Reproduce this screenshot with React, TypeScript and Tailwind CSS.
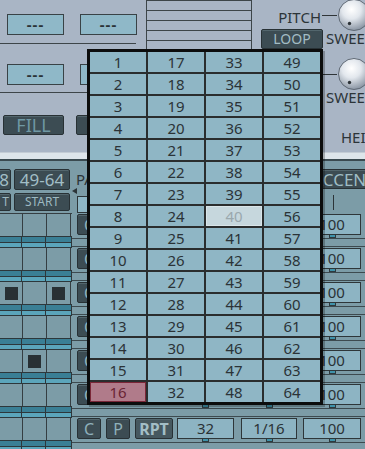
import React from "react";

const darkBtn =
  "flex items-center justify-center bg-[#3c4c53] border border-[#283135] rounded-[2px] shadow-[inset_0_1px_0_#53666d] leading-none";

function DashBox() {
  return (
    <div className="w-[57px] h-[21px] shrink-0 bg-[#8fb8c8] border border-[#394246] flex items-center justify-center text-[15px] font-bold tracking-[1px] text-[#2b3337] leading-none">
      ---
    </div>
  );
}

function Knob({ id }: { id: string }) {
  return (
    <svg width="34" height="34" viewBox="0 0 34 34" className="shrink-0">
      <defs>
        <radialGradient id={id} cx="42%" cy="32%" r="68%">
          <stop offset="0" stopColor="#ffffff" />
          <stop offset="0.45" stopColor="#e2e7ed" />
          <stop offset="1" stopColor="#8b96a4" />
        </radialGradient>
      </defs>
      <circle cx="17" cy="17" r="15.5" fill={`url(#${id})`} stroke="#5f6975" strokeWidth="1" />
      <circle cx="12.5" cy="25.5" r="1.7" fill="#2d3338" />
    </svg>
  );
}

function ValueBox({ w, ml, text }: { w: string; ml: string; text?: string }) {
  return (
    <div className={`flex flex-col items-center shrink-0 ${w} ${ml}`}>
      <div className="w-full h-[21px] bg-[#8db4c3] border border-[#2e3639] flex items-center justify-center text-[15px] text-[#2a3236] leading-none">
        {text}
      </div>
      <div className="w-[7px] h-[3px] bg-[#3f93ab] border border-t-0 border-[#2e3a3e]" />
    </div>
  );
}

// rows under the popup only show their first button edge and the "100" box
function SeqRow({ squares, full = false }: { squares: number[]; full?: boolean }) {
  return (
    <div className="flex h-[34px] shrink-0">
      {/* step grid */}
      <div className="w-[72px] shrink-0 flex flex-col">
        <div className="h-[22px] flex">
          {[0, 1, 2].map((i) => (
            <div
              key={i}
              className={`h-full border-r border-[#353e42] flex items-center justify-center ${i === 0 ? "w-[23px]" : "w-[24px]"}`}
            >
              {squares.includes(i) && <div className="w-[13px] h-[13px] bg-[#283034]" />}
            </div>
          ))}
        </div>
        <div className="h-[12px] flex flex-col border border-l-0 border-[#2d373b]">
          <div className="flex-1 bg-[#3a7f95] border-b border-[#2d373b] flex">
            <div className="w-[22px] border-r border-[#2d373b]" />
            <div className="w-[24px] border-r border-[#2d373b]" />
          </div>
          <div className="flex-1 bg-[#5ba5bb] flex">
            <div className="w-[22px] border-r border-[#2d373b]" />
            <div className="w-[24px] border-r border-[#2d373b]" />
          </div>
        </div>
      </div>

      {/* controls */}
      <div className="flex-1 flex flex-col">
        <div className="h-[22px] flex items-start">
          <div className={`${darkBtn} ml-[5px] w-[24px] h-[21px] text-[16px] text-[#8fb0ba]`}>C</div>
          <div className={`${darkBtn} ml-[5px] w-[24px] h-[21px] text-[16px] text-[#8fb0ba]`}>{full ? "P" : ""}</div>
          <div className={`${darkBtn} ml-[5px] w-[38px] h-[21px] text-[16px] font-bold text-[#a3bec6] bg-[#46585f]`}>
            {full ? "RPT" : ""}
          </div>
          <ValueBox w="w-[57px]" ml="ml-[4px]" text={full ? "32" : ""} />
          <ValueBox w="w-[56px]" ml="ml-[7px]" text={full ? "1/16" : ""} />
          <ValueBox w="w-[58px]" ml="ml-[6px]" text="100" />
        </div>
        <div className="h-[12px] flex flex-col">
          <div className="mt-[2px] h-px bg-[#3d4a4f]" />
          <div className="mt-[7px] h-px bg-[#3d4a4f]" />
        </div>
      </div>
    </div>
  );
}

function Popup() {
  const cells: number[] = [];
  for (let r = 0; r < 16; r++) for (let c = 0; c < 4; c++) cells.push(c * 16 + r + 1);
  return (
    <div className="absolute left-[87px] top-[49px] w-[236px] h-[356px] border-[3px] border-[#0c0d0d] bg-[#2a2d2e] grid grid-cols-4 grid-rows-16 gap-[2px] shadow-[2px_2px_0_rgba(0,0,0,0.25)]">
      {cells.map((n) => {
        let cls = "bg-[#8fb6c5] text-[#2b3337]";
        if (n === 40) cls = "bg-[#c6d7dd] text-[#9aa8ad] border border-[#d9e5e9]";
        if (n === 16) cls = "bg-[#b07b8a] text-[#6a2434] border border-[#7a2637]";
        return (
          <div key={n} className={`flex items-center justify-center text-[15px] leading-none ${cls}`}>
            {n}
          </div>
        );
      })}
    </div>
  );
}

export default function App() {
  return (
    <div className="relative w-[365px] h-[449px] overflow-hidden bg-[#a9b5c5] font-['Noto_Sans',sans-serif] text-[#2c3438]">
      {/* upper panel */}
      <div className="flex h-[152px]">
        {/* column A */}
        <div className="w-[146px] shrink-0 flex flex-col pt-[14px]">
          <div className="flex gap-[16px] pl-[7px]">
            <DashBox />
            <DashBox />
          </div>
          <div className="mt-[8px] h-px w-[136px] bg-[#3d4549]" />
          <div className="mt-[20px] flex gap-[16px] pl-[7px]">
            <DashBox />
            <DashBox />
          </div>
          <div className="mt-[7px] h-px w-[136px] bg-[#3d4549]" />
          <div className="mt-[22px] flex">
            <div className={`${darkBtn} ml-[3px] w-[61px] h-[20px] text-[18px] text-[#6f98a4]`}>FILL</div>
            <div className={`${darkBtn} ml-[12px] w-[61px] h-[20px]`} />
          </div>
        </div>

        {/* column B: staff lines */}
        <div className="w-[106px] shrink-0 border-x border-[#3d4549] flex flex-col">
          {[0, 1, 2, 3, 4].map((i) => (
            <div key={i} className="h-[10px] border-t border-[#3d4549] shrink-0" />
          ))}
        </div>

        {/* column C */}
        <div className="w-[71px] shrink-0 flex flex-col pt-[10px]">
          <div className="h-[15px] text-right pr-[2px] text-[15px] leading-[15px]">PITCH</div>
          <div className={`${darkBtn} mt-[4px] ml-[9px] w-[62px] h-[20px] text-[14px] text-[#a3bcc4]`}>LOOP</div>
        </div>

        {/* column D: knobs */}
        <div className="w-[42px] shrink-0 flex flex-col whitespace-nowrap">
          <div className="h-[30px] flex items-center">
            <div className="w-[15px] h-px bg-[#2f3538] shrink-0 -ml-px" />
            <Knob id="k1" />
          </div>
          <div className="mt-[1px] pl-[3px] text-[15px] leading-[15px]">SWEEP</div>
          <div className="mt-[13px] h-[30px] flex items-center">
            <div className="w-[15px] h-px bg-[#2f3538] shrink-0 -ml-px" />
            <Knob id="k2" />
          </div>
          <div className="mt-[1px] pl-[3px] text-[15px] leading-[15px]">SWEEP</div>
          <div className="mt-[25px] pl-[18px] text-[15px] leading-[15px]">HEIGHT</div>
        </div>
      </div>

      {/* light divider */}
      <div className="h-[9px] bg-[#dde5ea] border-t border-[#c3ccd4] border-b-2 border-b-[#3a4a50]" />

      {/* sequencer panel */}
      <div className="h-[288px] bg-[#7c9ca7] flex flex-col">
        <div className="h-[53px] flex shrink-0">
          <div className="w-[72px] shrink-0 flex flex-col pt-[8px] border-b border-[#353e42]">
            <div className="flex">
              <div className={`${darkBtn} -ml-[2px] w-[13px] h-[21px] text-[17px] text-[#a2bec6] justify-end pr-[1px]`}>8</div>
              <div className={`${darkBtn} ml-[3px] w-[56px] h-[21px] text-[17px] text-[#a2bec6]`}>49-64</div>
            </div>
            <div className="flex mt-[3px]">
              <div className={`${darkBtn} -ml-[2px] w-[13px] h-[18px] text-[12px] text-[#9db9c1] justify-end pr-[1px]`}>T</div>
              <div className={`${darkBtn} ml-[3px] w-[56px] h-[18px] text-[12px] text-[#9db9c1]`}>START</div>
            </div>
          </div>
          <div className="w-[60px] shrink-0 flex flex-col">
            <div className="mt-[11px] pl-[4px] h-[15px] text-[15px] leading-[15px] text-[#2c3438]">PATTERN</div>
            <div className="mt-[1px] w-0 h-0 border-y-[3.5px] border-y-transparent border-r-[5px] border-r-[#2c3438]" />
            <div className="mt-[2px] ml-[5px] w-[55px] h-[17px] bg-[#8fb6c5] border border-[#2e3639]" />
          </div>
          <div className="flex-1" />
          <div className="w-[62px] shrink-0 flex flex-col">
            <div className={`${darkBtn} mt-[8px] w-[82px] h-[20px] text-[17px] text-[#9fbcc4]`}>ACCENT</div>
            <div className="mt-[6px] ml-[30px] w-px h-[15px] bg-[#2c3438]" />
          </div>
        </div>

        <SeqRow squares={[]} />
        <SeqRow squares={[]} />
        <SeqRow squares={[0, 2]} />
        <SeqRow squares={[]} />
        <SeqRow squares={[1]} />
        <SeqRow squares={[]} />
        <SeqRow squares={[]} full />
      </div>

      <Popup />
    </div>
  );
}
